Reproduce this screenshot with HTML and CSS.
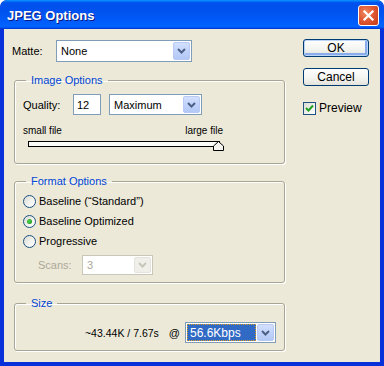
FILE: index.html
```html
<!DOCTYPE html>
<html>
<head>
<meta charset="utf-8">
<link rel="stylesheet" href="styles.css">
</head>
<body>
<div class="window">
  <div class="titlebar">
    <span class="title">JPEG Options</span>
    <span class="close"><svg width="19" height="19" viewBox="0 0 19 19"><path d="M5.5 5.5 L13.5 13.5 M13.5 5.5 L5.5 13.5" stroke="#fff" stroke-width="2.2" stroke-linecap="square"/></svg></span>
  </div>
  <div class="client">
    <div class="main">
      <div class="matte-row">
        <span class="matte-lbl">Matte:</span>
        <div class="combo combo-matte"><span class="combo-val">None</span><span class="drop"><svg width="9" height="6" viewBox="0 0 9 6"><path d="M1 1 L4.5 4.5 L8 1" fill="none" stroke="#4d6185" stroke-width="2"/></svg></span></div>
      </div>
      <fieldset class="group group-image">
        <legend>Image Options</legend>
        <div class="quality-row">
          <span class="quality-lbl">Quality:</span>
          <div class="textbox">12</div>
          <div class="combo combo-quality"><span class="combo-val">Maximum</span><span class="drop"><svg width="9" height="6" viewBox="0 0 9 6"><path d="M1 1 L4.5 4.5 L8 1" fill="none" stroke="#4d6185" stroke-width="2"/></svg></span></div>
        </div>
        <div class="slider-labels"><span>small file</span><span>large file</span></div>
        <div class="slider">
          <div class="track"></div>
          <svg class="thumb" width="11" height="10" viewBox="0 0 11 10"><path d="M0.5 9.5 L0.5 5 L5.5 0.5 L10.5 5 L10.5 9.5 Z" fill="#f4f3ee" stroke="#000"/></svg>
        </div>
      </fieldset>
      <fieldset class="group group-format">
        <legend>Format Options</legend>
        <div class="radio-row"><span class="radio"></span><span>Baseline (“Standard”)</span></div>
        <div class="radio-row"><span class="radio checked"><span class="dot"></span></span><span>Baseline Optimized</span></div>
        <div class="radio-row"><span class="radio"></span><span>Progressive</span></div>
        <div class="scans-row">
          <span class="scans-lbl">Scans:</span>
          <div class="combo combo-scans disabled"><span class="combo-val">3</span><span class="drop"><svg width="9" height="6" viewBox="0 0 9 6"><path d="M1 1 L4.5 4.5 L8 1" fill="none" stroke="#c9c7ba" stroke-width="2"/></svg></span></div>
        </div>
      </fieldset>
      <fieldset class="group group-size">
        <legend>Size</legend>
        <div class="size-row">
          <span class="size-text">~43.44K / 7.67s</span>
          <span class="at">@</span>
          <div class="combo combo-speed"><span class="combo-val selected">56.6Kbps</span><span class="drop"><svg width="9" height="6" viewBox="0 0 9 6"><path d="M1 1 L4.5 4.5 L8 1" fill="none" stroke="#4d6185" stroke-width="2"/></svg></span></div>
        </div>
      </fieldset>
    </div>
    <div class="side">
      <div class="btn btn-default">OK</div>
      <div class="btn">Cancel</div>
      <div class="check"><span class="checkbox"><svg width="9" height="9" viewBox="0 0 9 9"><path d="M1 4 L3.5 6.5 L8 1.5" fill="none" stroke="#21a121" stroke-width="2"/></svg></span><span>Preview</span></div>
    </div>
  </div>
</div>
</body>
</html>
```

FILE: styles.css
```css
* { box-sizing: border-box; }
html, body { margin: 0; padding: 0; }
body { width: 384px; height: 366px; overflow: hidden; background: #fff; font-family: "Liberation Sans", Arial, sans-serif; font-size: 11px; color: #000; }

.window {
  width: 384px; height: 366px;
  background: #0831d9;
  border-radius: 7px 7px 0 0;
  display: flex; flex-direction: column;
  overflow: hidden;
}
.titlebar {
  height: 29px; flex: none;
  display: flex; align-items: center; justify-content: space-between;
  padding: 0 5px 0 7px;
  background: linear-gradient(180deg, #0997ff 0%, #0053ee 9%, #0050ee 20%, #0053ee 45%, #0060ff 85%, #0066ff 90%, #005bff 94%, #003dd7 97%, #003dd7 100%);
  border-radius: 7px 7px 0 0;
}
.title {
  color: #fff; font-weight: bold; font-size: 13px;
  font-family: "Liberation Sans", Arial, sans-serif;
  text-shadow: 1px 1px 0 #0a1883;
  padding-top: 1px;
}
.close {
  width: 21px; height: 21px;
  border: 1px solid #fff; border-radius: 3px;
  background: radial-gradient(circle at 35% 35%, #f08a62 0%, #e05a35 45%, #c43a14 100%);
  display: flex; align-items: center; justify-content: center;
  margin-top: 1px;
}

.client {
  flex: 1;
  margin: 0 4px 4px 4px;
  background: #ece9d8;
  display: flex;
}
.main { width: 281px; padding: 11px 0 0 8px; }
.side { padding-top: 10px; margin-left: 18px; display: flex; flex-direction: column; }

.matte-row { display: flex; align-items: center; height: 22px; }
.matte-lbl { width: 44px; }

.combo {
  height: 21px; border: 1px solid #7f9db9; background: #fff;
  display: flex; align-items: stretch; padding: 1px;
}
.combo-val { flex: 1; padding-left: 3px; display: flex; align-items: center; }
.drop {
  width: 17px; flex: none;
  border: 1px solid #b7c9f4; border-radius: 2px;
  background: linear-gradient(180deg, #d3e0fd 0%, #c1d3fb 50%, #b4c8f6 100%);
  display: flex; align-items: center; justify-content: center;
}
.combo-matte { width: 136px; height: 22px; }
.combo-quality { width: 93px; margin-left: 8px; }

.group {
  margin: 0; padding: 0;
  border: 1px solid #a7a593;
  border-radius: 3px;
  box-shadow: 1px 1px 0 #fff, inset 1px 1px 0 #fff;
  margin-left: 2px;
  width: 271px;
}
.group legend {
  color: #0046d5; padding: 0 5px; margin-left: 3px;
  line-height: 13px; font-size: 11px;
}
.group-image { margin-top: 12px; padding: 7px 8px 13px 8px; }
.quality-row { display: flex; align-items: center; height: 21px; }
.quality-lbl { width: 50px; }
.textbox {
  width: 28px; height: 21px; border: 1px solid #7f9db9; background: #fff;
  padding-left: 3px; display: flex; align-items: center;
}
.slider-labels {
  margin-top: 9px; width: 200px; line-height: 13px;
  display: flex; justify-content: space-between; font-size: 10px;
}
.slider { position: relative; margin-top: 4px; margin-left: 5px; width: 197px; height: 9px; }
.track {
  width: 192px; height: 6px;
  border: 1px solid #000;
  background: #fbfbf8;
}
.thumb { position: absolute; left: 185px; top: 0; }

.group-format { margin-top: 11px; padding: 3px 8px 7px 8px; }
.radio-row { display: flex; align-items: center; height: 20px; }
.radio {
  width: 13px; height: 13px; border-radius: 50%;
  border: 1px solid #1c5180;
  background: linear-gradient(135deg, #dcdcd5 0%, #f4f4f1 60%, #fff 100%);
  margin-right: 3px; display: flex; align-items: center; justify-content: center;
}
.dot { width: 5px; height: 5px; border-radius: 50%; background: radial-gradient(circle at 40% 40%, #55d651, #21a121 70%); }
.scans-row { display: flex; align-items: center; margin-top: 4px; padding-left: 15px; height: 20px; }
.scans-lbl { width: 44px; color: #aca899; }
.combo-scans { width: 71px; height: 20px; border-color: #c9c7ba; }
.combo-scans .combo-val { color: #aca899; }
.combo-scans .drop { background: #f0efea; border-color: #e4e3dc; }

.group-size { margin-top: 14px; padding: 12px 8px 7px 8px; }
.size-row { display: flex; align-items: center; justify-content: flex-end; height: 21px; }
.size-text { font-size: 10.5px; }
.at { margin-left: 10px; }
.combo-speed { width: 91px; margin-left: 5px; }
.combo-val.selected {
  background: #316ac5; color: #fff; font-size: 12px;
  outline: 1px dotted #e0a020; outline-offset: -1px;
  margin-right: 1px;
}

.btn {
  width: 66px; height: 18px;
  border: 1px solid #003c74; border-radius: 3px;
  background: linear-gradient(180deg, #fff 0%, #f3f3ef 60%, #e3e2da 100%);
  display: flex; align-items: center; justify-content: center;
  font-size: 12px;
}
.btn-default { box-shadow: inset 0 0 0 1px #bcd4f6, inset -1px -1px 0 2px #89adec; }
.btn + .btn { margin-top: 11px; }
.check { display: flex; align-items: center; margin-top: 15px; font-size: 12px; }
.checkbox {
  width: 13px; height: 13px; border: 1px solid #1c5180;
  background: linear-gradient(135deg, #dcdcd5 0%, #fff 100%);
  display: flex; align-items: center; justify-content: center;
  margin-right: 3px;
}
```
